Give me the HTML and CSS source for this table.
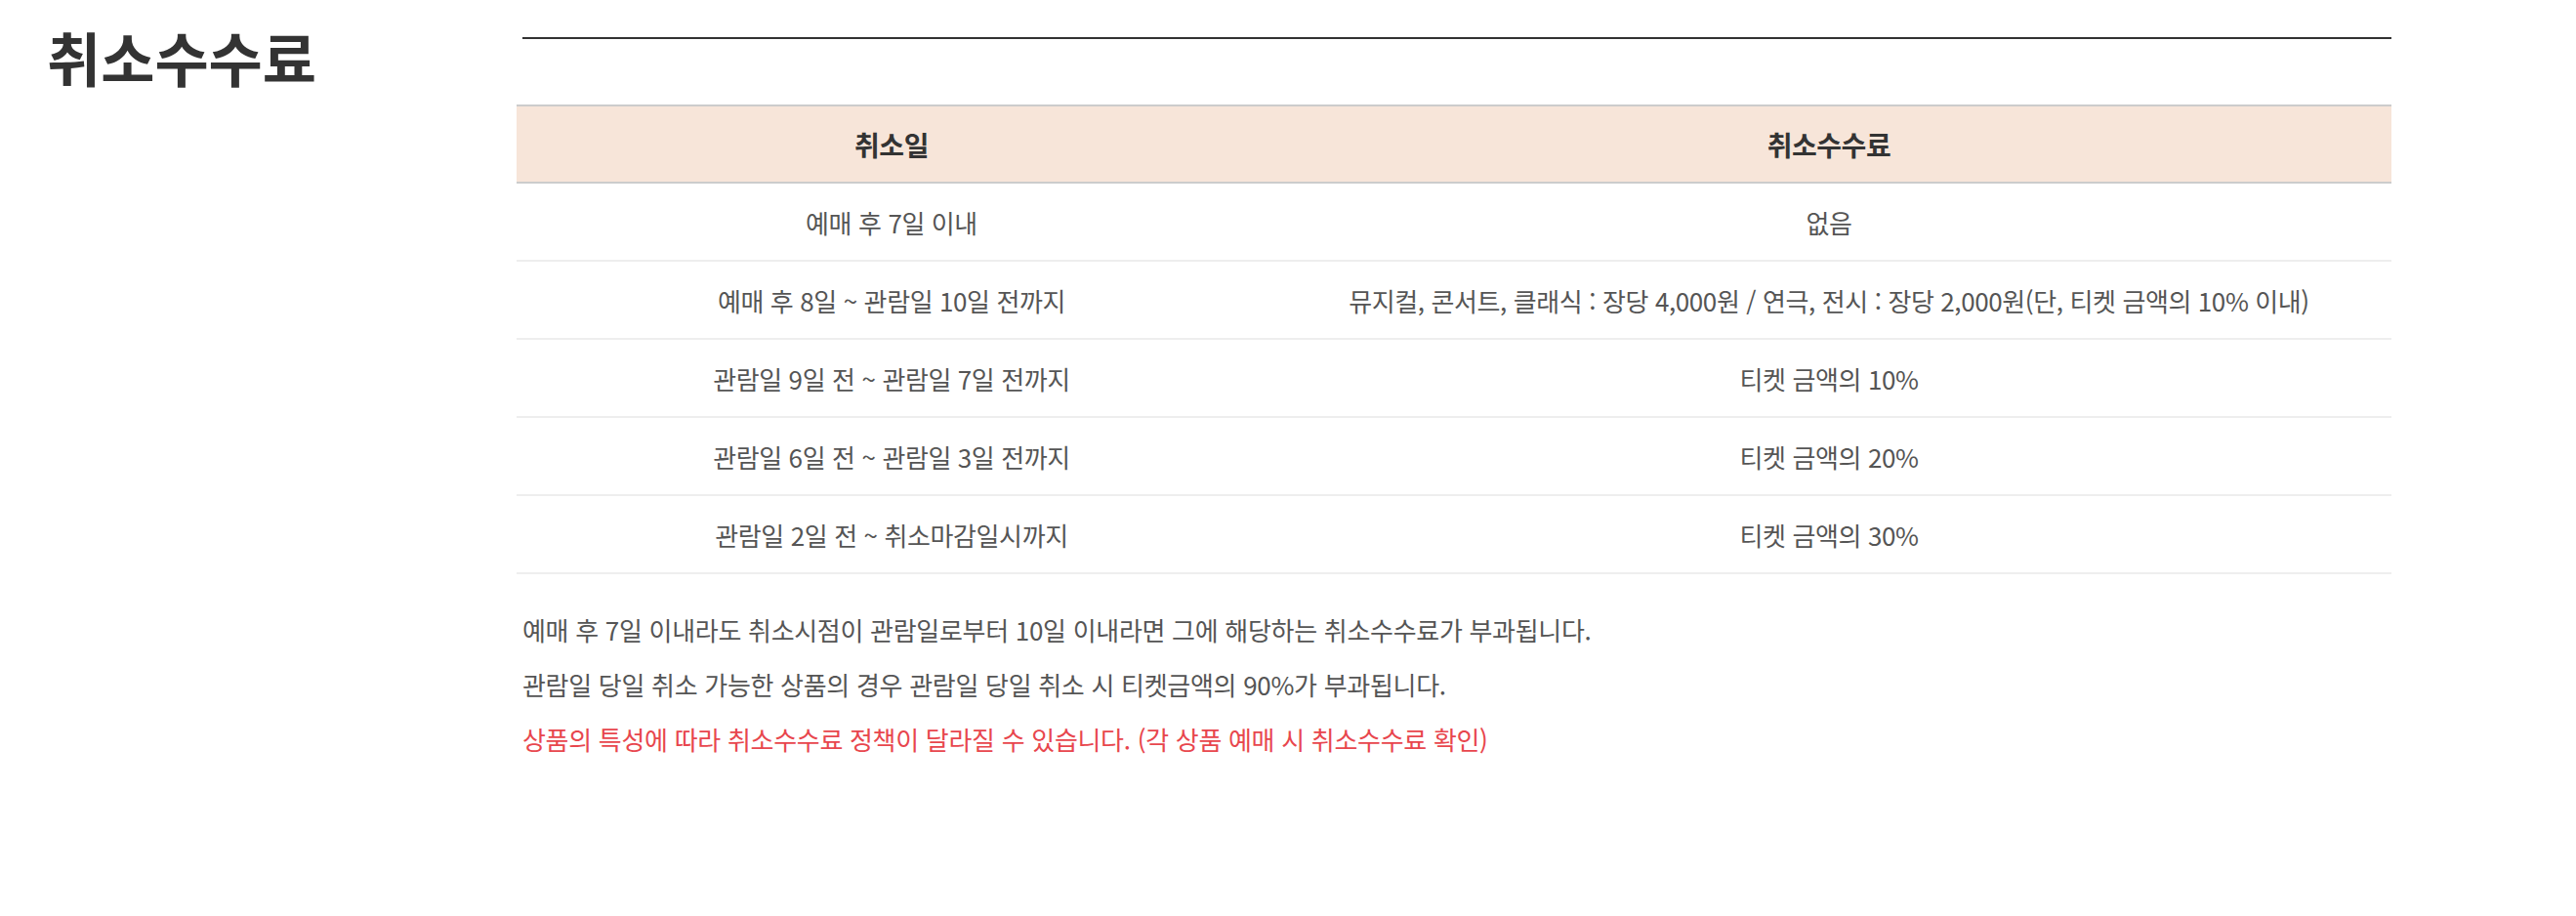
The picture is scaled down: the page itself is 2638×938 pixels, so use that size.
FILE: index.html
```html
<!DOCTYPE html>
<html lang="ko">
<head>
    <meta charset="UTF-8">
    <meta name="viewport" content="width=device-width, initial-scale=1.0">
    <title>취소수수료</title>
    <link rel="stylesheet" href="styles.css">
</head>
<body>
    <div class="wrap">
        <div class="side">
            <h2>취소수수료</h2>
        </div>
        <div class="main">
            <div class="top-line"></div>

            <table class="fee-table">
                <colgroup>
                    <col class="col-date">
                    <col class="col-fee">
                </colgroup>
                <thead>
                    <tr>
                        <th>취소일</th>
                        <th>취소수수료</th>
                    </tr>
                </thead>
                <tbody>
                    <tr>
                        <td>예매 후 7일 이내</td>
                        <td>없음</td>
                    </tr>
                    <tr>
                        <td>예매 후 8일 ~ 관람일 10일 전까지</td>
                        <td>뮤지컬, 콘서트, 클래식 : 장당 4,000원 / 연극, 전시 : 장당 2,000원(단, 티켓 금액의 10% 이내)</td>
                    </tr>
                    <tr>
                        <td>관람일 9일 전 ~ 관람일 7일 전까지</td>
                        <td>티켓 금액의 10%</td>
                    </tr>
                    <tr>
                        <td>관람일 6일 전 ~ 관람일 3일 전까지</td>
                        <td>티켓 금액의 20%</td>
                    </tr>
                    <tr>
                        <td>관람일 2일 전 ~ 취소마감일시까지</td>
                        <td>티켓 금액의 30%</td>
                    </tr>
                </tbody>
            </table>

            <ul class="notes">
                <li>예매 후 7일 이내라도 취소시점이 관람일로부터 10일 이내라면 그에 해당하는 취소수수료가 부과됩니다.</li>
                <li>관람일 당일 취소 가능한 상품의 경우 관람일 당일 취소 시 티켓금액의 90%가 부과됩니다.</li>
                <li class="warn">상품의 특성에 따라 취소수수료 정책이 달라질 수 있습니다. (각 상품 예매 시 취소수수료 확인)</li>
            </ul>
        </div>
    </div>
</body>
</html>
```

FILE: styles.css
```css
body {
    margin: 0;
    background: #fff;
    font-family: "Noto Sans CJK KR", "Noto Sans", sans-serif;
    color: #555;
}
.wrap {
    display: flex;
    padding: 0 189px 0 48px;
}
.side {
    width: 481px;
    flex-shrink: 0;
}
.side h2 {
    margin: 0;
    padding-top: 22px;
    font-size: 60px;
    line-height: 1.2;
    font-weight: 700;
    color: #333;
}
.main {
    flex: 1;
}
.top-line {
    height: 2px;
    margin: 38px 0 0 6px;
    background: #333;
}
.fee-table {
    width: 100%;
    margin-top: 67px;
    border-collapse: collapse;
    font-size: 26px;
    letter-spacing: -0.4px;
}
.col-date {
    width: 40%;
}
.fee-table th {
    height: 77px;
    padding: 0;
    background: #f7e5d9;
    border-top: 2px solid #ccc;
    border-bottom: 2px solid #ccc;
    font-size: 28px;
    font-weight: 700;
    letter-spacing: -0.5px;
    color: #333;
}
.fee-table td {
    height: 78px;
    padding: 0;
    text-align: center;
    border-bottom: 2px solid #eee;
}
.notes {
    list-style: none;
    margin: 29px 0 0;
    padding: 0 0 0 6px;
    font-size: 26px;
    line-height: 56px;
    letter-spacing: -0.3px;
}
.notes .warn {
    color: #e8464d;
}
```
